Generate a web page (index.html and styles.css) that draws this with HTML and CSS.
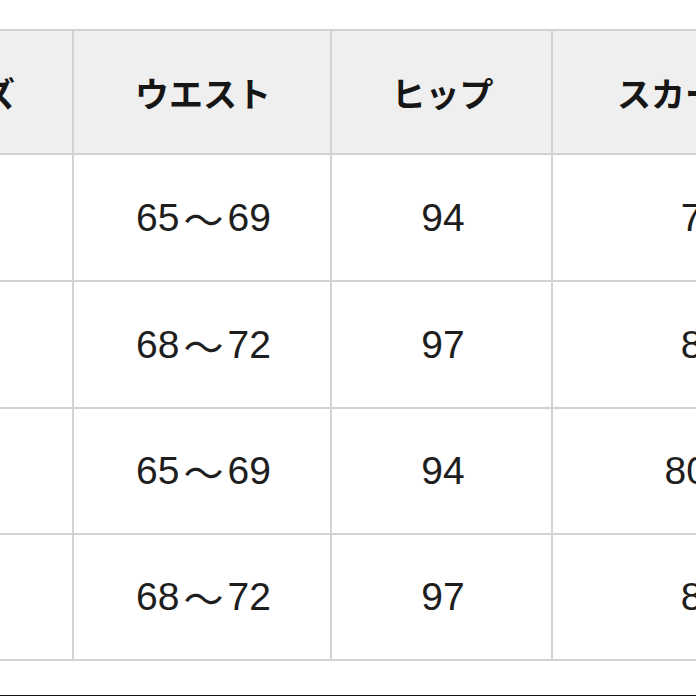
FILE: index.html
```html
<!DOCTYPE html>
<html lang="ja">
<head>
<meta charset="utf-8">
<link rel="stylesheet" href="styles.css">
</head>
<body>
<div class="page">
  <div class="table">
    <div class="cell head">サイズ</div>
    <div class="cell head">ウエスト</div>
    <div class="cell head">ヒップ</div>
    <div class="cell head">スカート丈</div>

    <div class="cell">M</div>
    <div class="cell">65<span class="tilde">～</span>69</div>
    <div class="cell">94</div>
    <div class="cell">78</div>

    <div class="cell">L</div>
    <div class="cell">68<span class="tilde">～</span>72</div>
    <div class="cell">97</div>
    <div class="cell">81</div>

    <div class="cell">M</div>
    <div class="cell">65<span class="tilde">～</span>69</div>
    <div class="cell">94</div>
    <div class="cell">80.5</div>

    <div class="cell">L</div>
    <div class="cell">68<span class="tilde">～</span>72</div>
    <div class="cell">97</div>
    <div class="cell">83</div>
  </div>
  <div class="bottom-bar"></div>
</div>
</body>
</html>
```
FILE: styles.css
```css
html, body {
  margin: 0;
  padding: 0;
  background: #ffffff;
}
body {
  width: 696px;
  height: 696px;
  overflow: hidden;
}
.page {
  position: relative;
  width: 696px;
  height: 696px;
  overflow: hidden;
  padding-top: 29px;
  box-sizing: border-box;
}
.table {
  display: grid;
  grid-template-columns: 217px 256px 219px 296px;
  grid-template-rows: 122px 125px 125px 124px 124px;
  gap: 2px;
  padding: 2px;
  background: #d2d2d2;
  margin-left: -147px;
  width: max-content;
}
.cell {
  background: #ffffff;
  display: flex;
  align-items: center;
  justify-content: center;
  font-family: "Liberation Sans", "Noto Sans CJK JP", sans-serif;
  font-size: 39px;
  color: #1e1e1e;
  white-space: nowrap;
  padding-left: 3px;
}
.tilde {
  font-family: "Noto Sans CJK JP", sans-serif;
  font-size: 40px;
  margin: 0 4px;
}
.cell.head {
  background: #efefef;
  font-family: "Noto Sans CJK JP", sans-serif;
  font-weight: 700;
  font-size: 34px;
  color: #161616;
  padding-left: 2px;
}
.bottom-bar {
  position: absolute;
  left: 0;
  right: 0;
  bottom: 0;
  height: 1px;
  background: #111111;
}
```
